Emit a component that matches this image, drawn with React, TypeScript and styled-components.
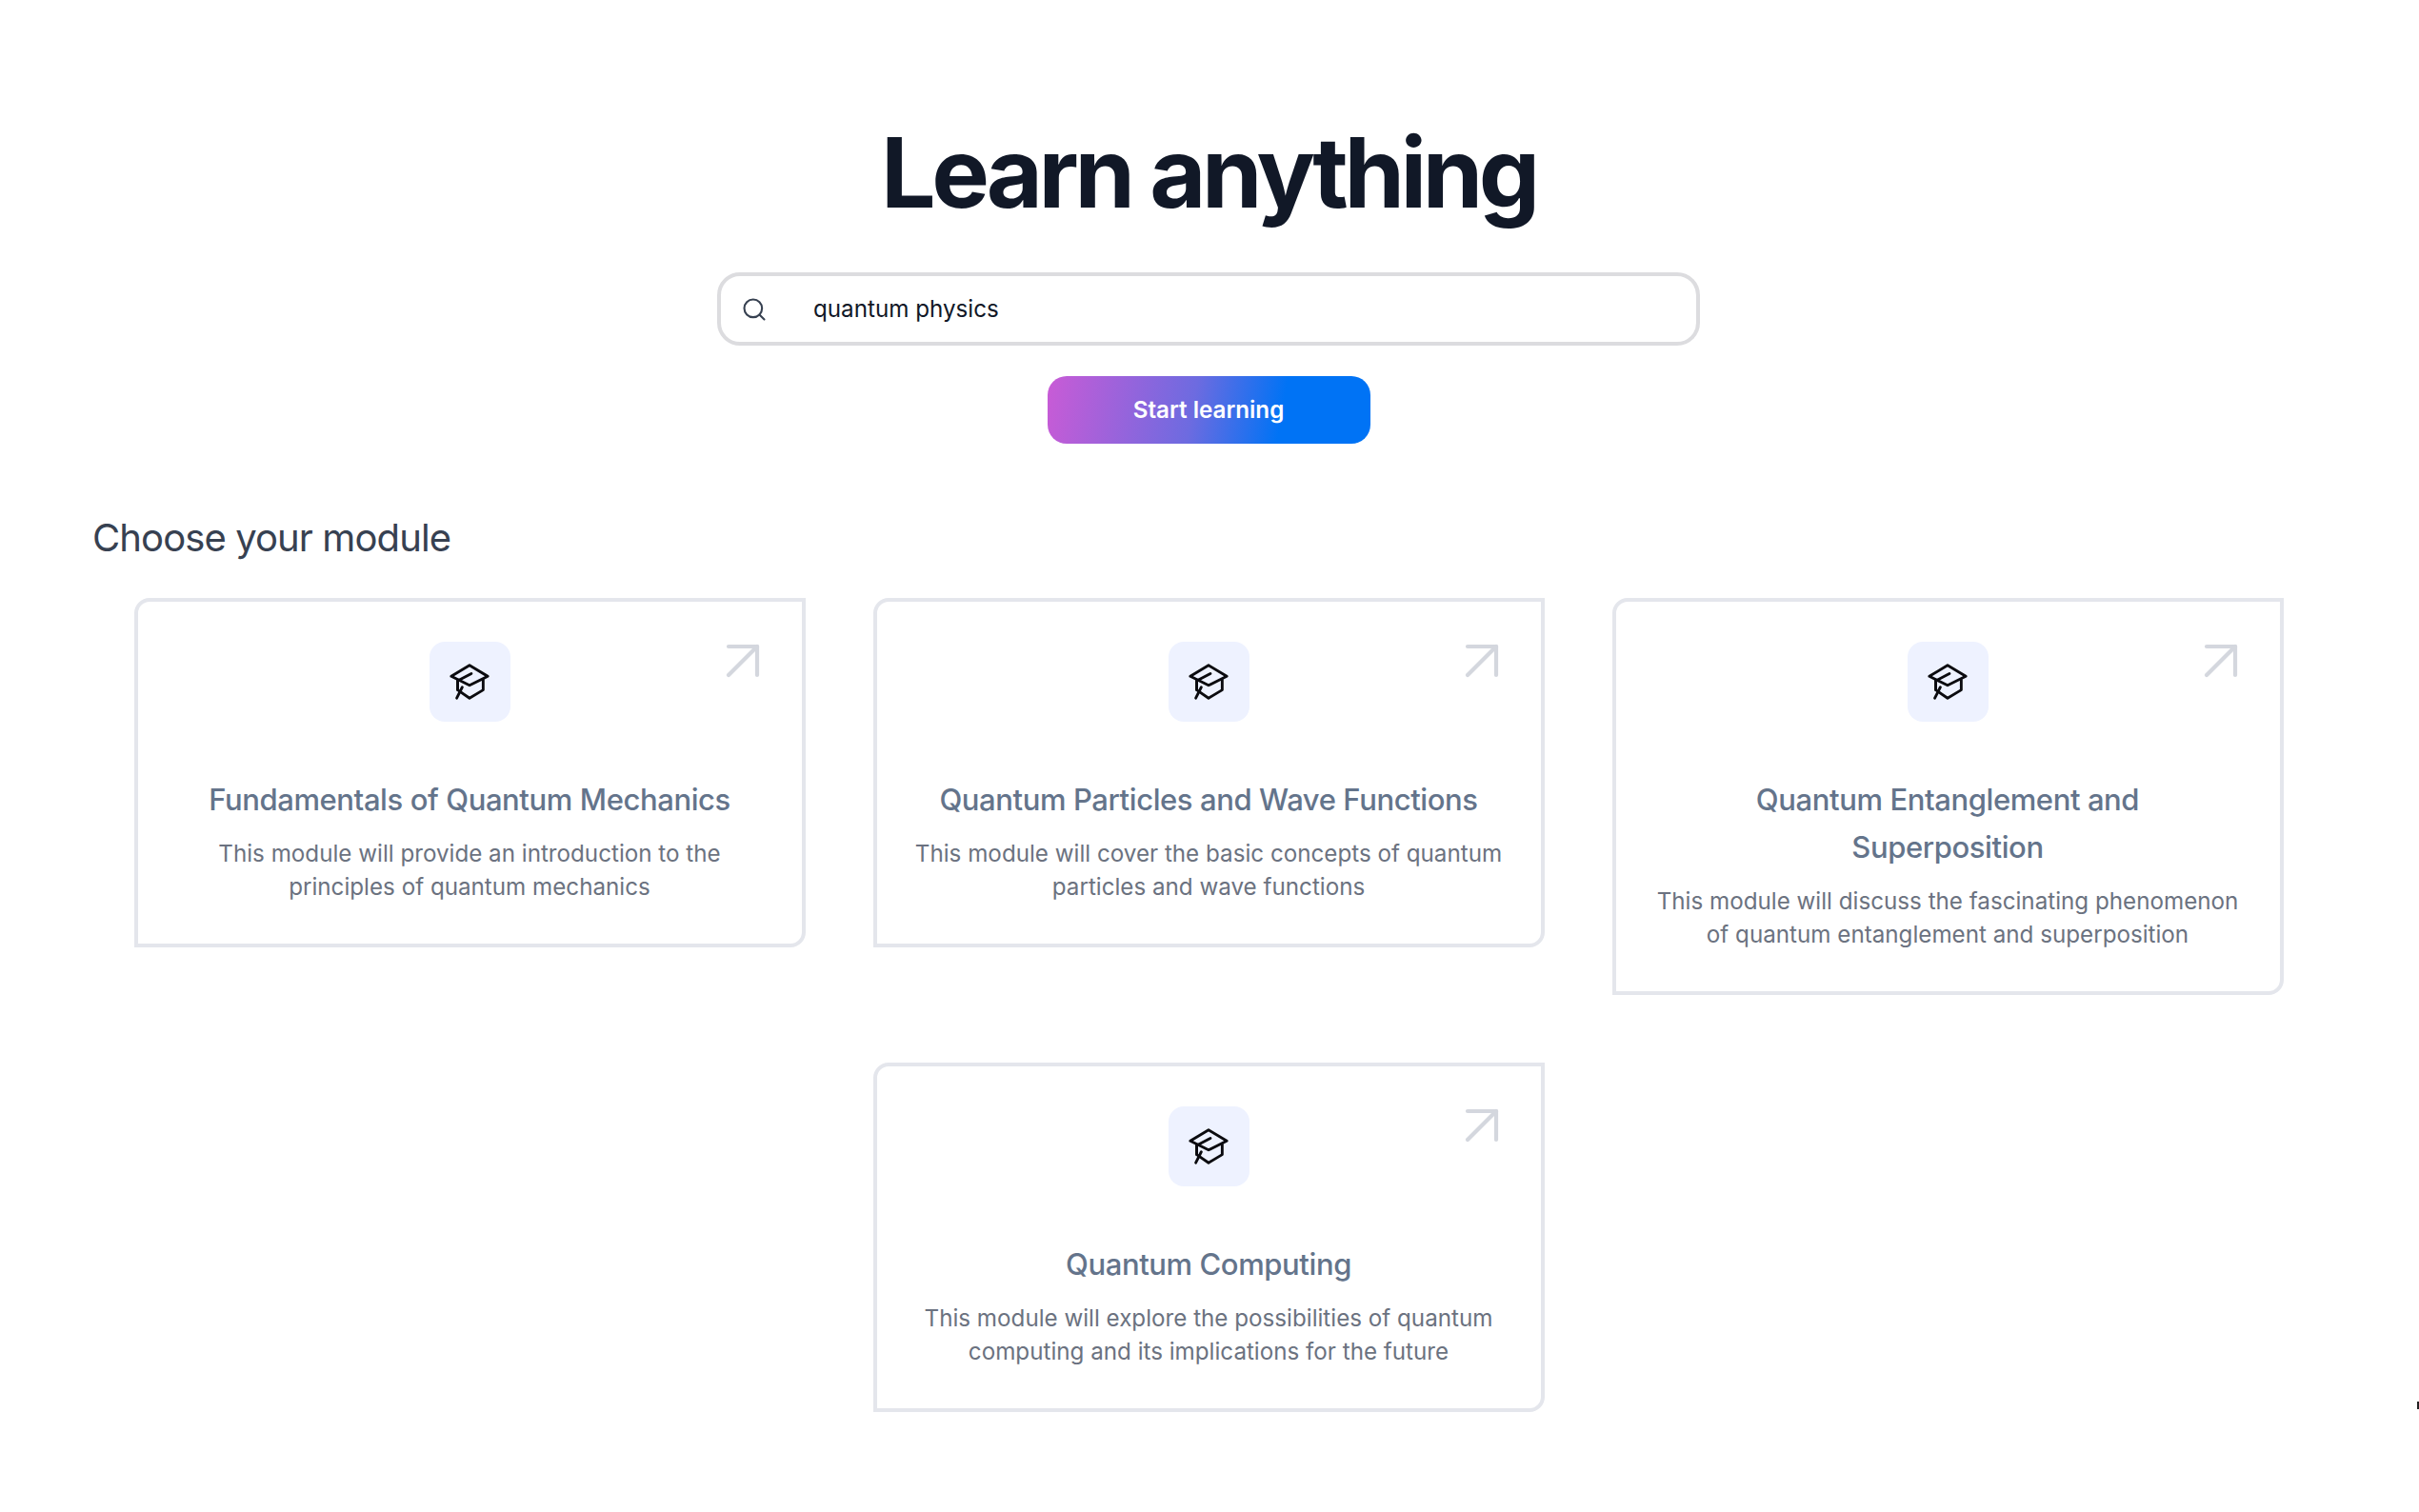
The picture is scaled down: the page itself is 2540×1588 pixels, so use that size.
import styled, { createGlobalStyle } from 'styled-components';
import { Search, ArrowUpRight } from 'lucide-react';

const GlobalStyle = createGlobalStyle`
    html, body { margin: 0; padding: 0; background: #fff; }
    * { box-sizing: border-box; }
    body { font-family: Inter, "Liberation Sans", sans-serif; overflow: hidden; }
`;

const Page = styled.main`
    position: relative;
    width: 2538px;
    height: 1588px;
    padding-top: 113px;
    display: flex;
    flex-direction: column;
    align-items: center;
`;

const Title = styled.h1`
    margin: 0;
    font-size: 102px;
    line-height: 136px;
    font-weight: 700;
    letter-spacing: -4.4px;
    color: #111827;
`;

const SearchBar = styled.div`
    display: flex;
    align-items: center;
    width: 1032px;
    height: 77px;
    margin-top: 37px;
    padding: 0 21px;
    gap: 48px;
    border: 4px solid #dcdcdf;
    border-radius: 24px;
    background: #fff;
    font-size: 24.2px;
    color: #111827;

    svg { color: #374151; flex: none; }
`;

const StartButton = styled.button`
    width: 339px;
    height: 71px;
    margin-top: 32px;
    border: 0;
    border-radius: 20px;
    background: linear-gradient(100deg, #c95bd6 0%, #6d6be0 45%, #0073f5 72%);
    color: #fff;
    font: 600 24.2px Inter, sans-serif;
`;

const SectionHead = styled.h2`
    align-self: flex-start;
    margin: 74px 0 0 97px;
    font-size: 40px;
    line-height: 50px;
    font-weight: 400;
    letter-spacing: -0.9px;
    color: #374151;
`;

const Grid = styled.div`
    display: grid;
    grid-template-columns: repeat(3, 705px);
    justify-content: center;
    align-items: start;
    column-gap: 71px;
    row-gap: 71px;
    margin-top: 38px;
`;

const Card = styled.article<{ $col?: number }>`
    position: relative;
    grid-column: ${(p) => p.$col ?? 'auto'};
    display: flex;
    flex-direction: column;
    align-items: center;
    padding: 42px 34px 42px;
    border: 4px solid #e4e6ec;
    border-radius: 16px 0 16px 0;
    text-align: center;
`;

const IconBox = styled.div`
    display: flex;
    align-items: center;
    justify-content: center;
    width: 85px;
    height: 84px;
    border-radius: 16px;
    background: #eef2ff;
`;

const Corner = styled.span`
    position: absolute;
    top: 26px;
    right: 26px;
    display: flex;
    color: #d4d7de;
`;

const CardTitle = styled.h3`
    max-width: 600px;
    margin: 57px 0 0;
    font-size: 31px;
    line-height: 50px;
    font-weight: 550;
    letter-spacing: -0.4px;
    color: #64748b;
`;

const CardText = styled.p`
    margin: 14px 0 0;
    font-size: 24.2px;
    line-height: 35px;
    font-weight: 400;
    color: #6b7280;
`;

const EdgeMark = styled.i`
    position: absolute;
    left: 2538px;
    top: 1472px;
    width: 2px;
    height: 8px;
    background: #222;
`;

const CapIcon = () => (
    <svg width="44" height="44" viewBox="0 0 46 44" fill="none" stroke="#0b0b0f" strokeWidth="3" strokeLinejoin="round" strokeLinecap="round">
        <path d="M23 4 L43 16 L23 26 L3 16 Z" />
        <path d="M10 20 V31 L23 40 L38 31 V20" />
        <path d="M25 13 L10 21 V31" />
        <path d="M9 40 L15 28" />
    </svg>
);

const modules = [
    { title: 'Fundamentals of Quantum Mechanics', text: 'This module will provide an introduction to the principles of quantum mechanics' },
    { title: 'Quantum Particles and Wave Functions', text: 'This module will cover the basic concepts of quantum particles and wave functions' },
    { title: 'Quantum Entanglement and Superposition', text: 'This module will discuss the fascinating phenomenon of quantum entanglement and superposition' },
    { title: 'Quantum Computing', text: 'This module will explore the possibilities of quantum computing and its implications for the future', col: 2 },
];

export default () => {
    return (
        <Page>
            <GlobalStyle />
            <Title>Learn anything</Title>
            <SearchBar>
                <Search size={28} strokeWidth={1.8} />
                quantum physics
            </SearchBar>
            <StartButton>Start learning</StartButton>
            <SectionHead>Choose your module</SectionHead>
            <Grid>
                {modules.map((m) => (
                    <Card key={m.title} $col={m.col}>
                        <IconBox><CapIcon /></IconBox>
                        <Corner><ArrowUpRight size={72} strokeWidth={1.4} /></Corner>
                        <CardTitle>{m.title}</CardTitle>
                        <CardText>{m.text}</CardText>
                    </Card>
                ))}
            </Grid>
            <EdgeMark />
        </Page>
    );
};
